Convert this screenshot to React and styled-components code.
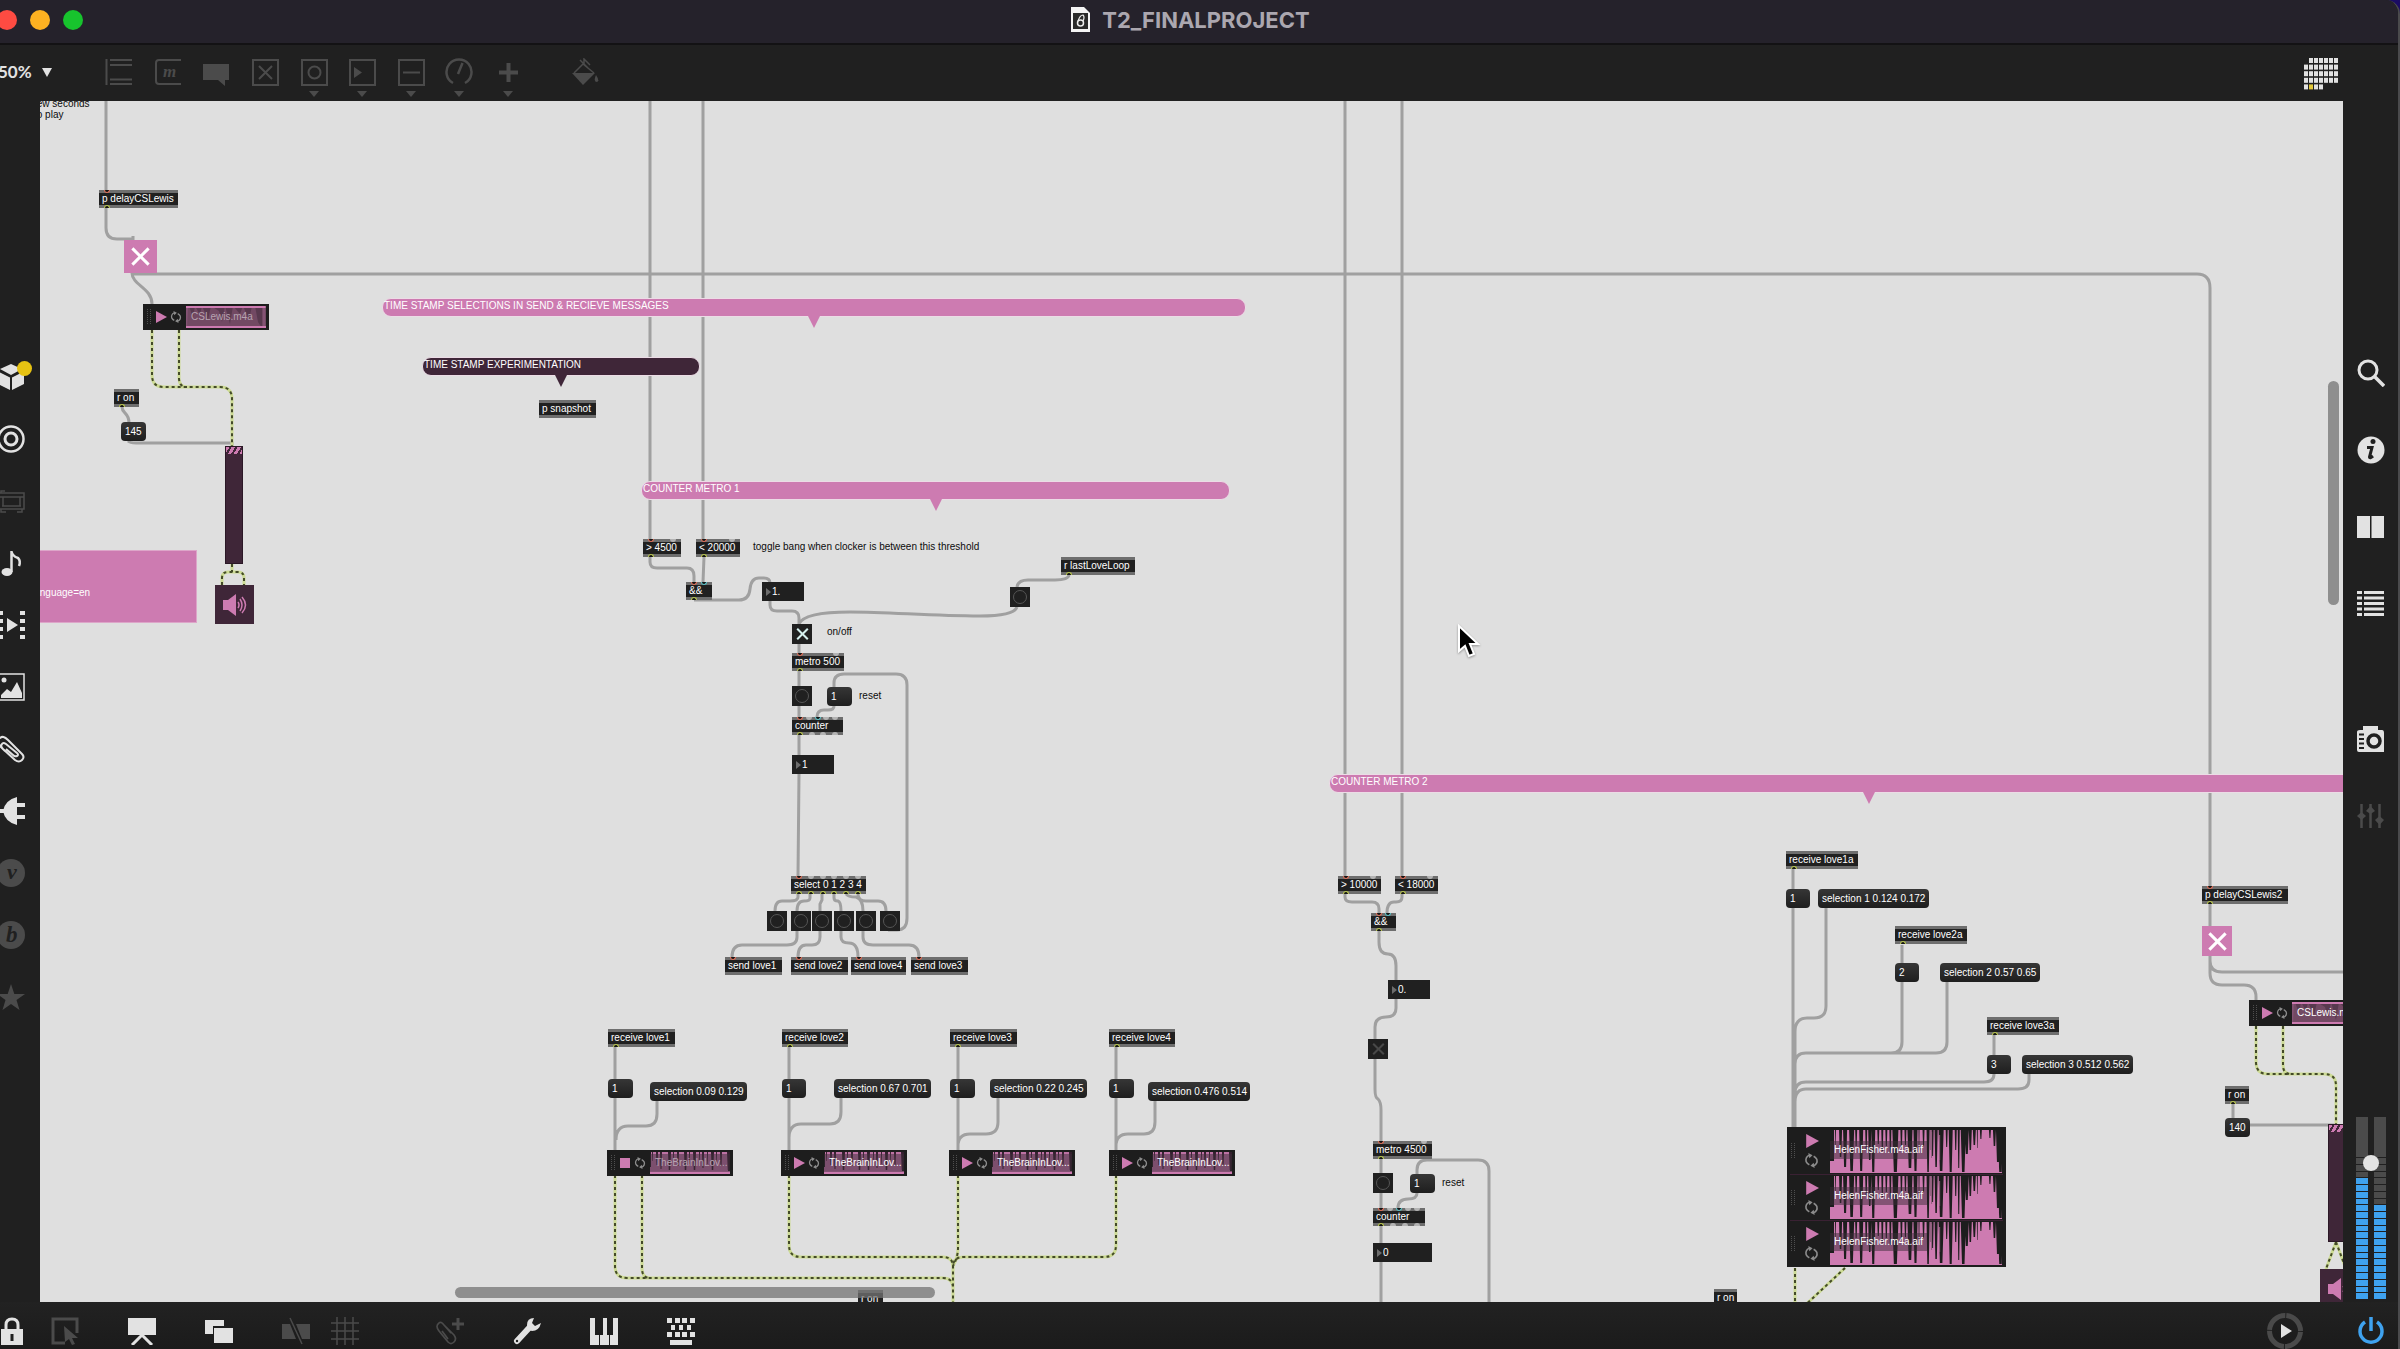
import React from 'react';
import styled, { createGlobalStyle, css } from 'styled-components';

const c = {
  chrome: '#202020',
  canvas: '#dfdfdf',
  pink: '#cd7bb1',
  plum: '#3f2638',
  box: '#202020',
  bar: '#6e6e6e',
  cord: '#a0a0a0',
  icon: '#e2e2e2',
  dim: '#4b4b4b',
  blue: '#3fa2ef',
};

const sans = `"Liberation Sans", Arial, sans-serif`;

const GlobalStyle = createGlobalStyle`
  *, *::before, *::after { box-sizing: border-box; }
  body { margin: 0; background: #1b0c63; font-family: ${sans}; overflow: hidden; }
  button, input, select { font: inherit; margin: 0; border: 0; padding: 0; }
  svg { display: block; }
`;

/* ---------- window frame ---------- */

const Window = styled.div`
  display: flex;
  flex-direction: column;
  height: 100vh;
  background: ${c.chrome};
  border-right: 2px solid #4a4a4c;
  border-top-right-radius: 14px;
  overflow: hidden;
`;

const TitleBar = styled.header`
  display: grid;
  grid-template-columns: 1fr auto 1fr;
  align-items: center;
  height: 45px;
  flex: none;
  padding-bottom: 4px;
  background: #25222b;
  border-bottom: 2px solid #131214;
`;

const Lights = styled.div`
  display: flex;
  gap: 13px;
  margin-left: -3px;
`;

const Light = styled.button`
  width: 20px;
  height: 20px;
  border-radius: 50%;
  background: ${(p) => p.$color};
`;

const Title = styled.h1`
  display: flex;
  align-items: center;
  gap: 12px;
  margin: 0;
  padding-right: 17px;
  font: 700 22px/24px Inter, ${sans};
  color: #aba7af;
`;

const ToolBar = styled.div`
  display: flex;
  align-items: flex-start;
  flex: none;
  height: 56px;
  padding: 13px 59px 0 0;
`;

const ZoomLabel = styled.label`
  display: flex;
  align-items: center;
  gap: 8px;
  width: 107px;
  height: 28px;
  margin-left: -2px;
`;

const ZoomSelect = styled.select`
  appearance: none;
  width: 36px;
  background: none;
  color: ${c.icon};
  font: 700 17px/24px Lato, ${sans};
`;

const ObjectTools = styled.div`
  display: flex;
  justify-content: space-between;
  width: 417px;
  margin-right: 49px;
`;

const ToolButton = styled.button`
  display: flex;
  flex-direction: column;
  align-items: center;
  gap: 5px;
  background: none;
  color: ${(p) => (p.$dim ? c.dim : c.icon)};
`;

const Spacer = styled.div`
  flex: 1;
`;

const Main = styled.div`
  display: flex;
  flex: 1;
  min-height: 0;
`;

const LeftRail = styled.nav`
  display: flex;
  flex-direction: column;
  gap: 34px;
  width: 43px;
  flex: none;
  margin-left: -3px;
  padding-top: 262px;
`;

const RightRail = styled.aside`
  display: flex;
  flex-direction: column;
  align-items: center;
  width: 55px;
  flex: none;
  padding: 258px 0 3px;
`;

const RailGroup = styled.nav`
  display: flex;
  flex-direction: column;
  gap: 49px;
  margin-bottom: 107px;
`;

const RailButton = styled.button`
  position: relative;
  width: 28px;
  height: 28px;
  background: none;
  color: ${(p) => (p.$dim ? c.dim : c.icon)};
`;

const Badge = styled.span`
  position: absolute;
  top: -2px;
  left: 20px;
  width: 15px;
  height: 15px;
  border-radius: 50%;
  background: #e6c212;
`;

const BottomBar = styled.footer`
  display: flex;
  align-items: center;
  flex: none;
  height: 47px;
  padding: 10px 13px 0 0;
  background: linear-gradient(#222222, #1b1b1b);
`;

const BottomGroup = styled.div`
  display: flex;
  gap: 49px;
  margin-left: ${(p) => p.$before}px;
`;

const BottomEnd = styled.div`
  display: flex;
  align-items: center;
  gap: 54px;
  margin-left: auto;
`;

const PlainButton = styled.button`
  background: none;
  color: ${(p) => p.$color || c.icon};
`;

/* ---------- master volume ---------- */

const Volume = styled.label`
  position: relative;
  display: flex;
  gap: 6px;
  height: 182px;
  margin-top: auto;
`;

const Meter = styled.span`
  display: flex;
  flex-direction: column;
  gap: 1px;
  width: 12px;
`;

const Headroom = styled.span`
  height: 40px;
  background: ${c.dim};
`;

const Segment = styled.span`
  flex: 1;
  background: ${(p) => (p.$on ? c.blue : c.dim)};
`;

const VolumeRange = styled.input`
  position: absolute;
  inset: 0 7px;
  width: 16px;
  height: 182px;
  appearance: none;
  background: none;
  writing-mode: vertical-lr;
  direction: rtl;
  &::-webkit-slider-thumb {
    appearance: none;
    width: 16px;
    height: 16px;
    border-radius: 50%;
    background: #e4e4e4;
  }
`;

/* ---------- patcher canvas ---------- */

const Canvas = styled.main`
  position: relative;
  flex: 1;
  min-width: 0;
  overflow: hidden;
  background: ${c.canvas};
`;

const Surface = styled.div`
  position: absolute;
  left: -40px;
  top: -101px;
  width: 2600px;
  height: 1500px;
`;

const Cords = styled.svg`
  position: absolute;
  inset: 0;
  fill: none;
  stroke-linecap: butt;
`;

const at = css`
  position: absolute;
  left: ${(p) => p.$x}px;
  top: ${(p) => p.$y}px;
  ${(p) => p.$w && `width: ${p.$w}px;`}
`;

const nodeText = css`
  font-size: 10px;
  line-height: 12px;
  white-space: nowrap;
  color: #ffffff;
`;

const ObjectBox = styled.div`
  ${at}
  ${nodeText}
  background: ${c.box};
`;

const ObjectText = styled.div`
  padding: 0 3px;
`;

const PortBar = styled.div`
  display: flex;
  justify-content: space-between;
  height: 3px;
  padding: 0 5px;
  background: ${c.bar};
`;

const portColors = { r: '#e0705a', b: '#5cc4c9', g: '#b9c64e' };

const Port = styled.span`
  width: 6px;
  height: 3px;
  border-radius: ${(p) => (p.$out ? '3px 3px 0 0' : '0 0 3px 3px')};
  background: ${(p) => (p.$kind === 'n' ? '#b4b4b4' : '#151515')};
  ${(p) =>
    p.$kind !== 'n' &&
    `border: 1px solid ${portColors[p.$kind]}; border-${p.$out ? 'bottom' : 'top'}: 0;`}
`;

const Message = styled.button`
  ${at}
  ${nodeText}
  height: 19px;
  padding: 0 4px;
  text-align: left;
  border-radius: 4px;
  background: linear-gradient(#363636, #1e1e1e);
`;

const NumberField = styled.label`
  ${at}
  ${nodeText}
  display: flex;
  align-items: center;
  gap: 1px;
  height: 19px;
  padding-left: 4px;
  background: ${c.box};
  &::before {
    content: '';
    border: 4px solid transparent;
    border-left: 5px solid #6c6c6c;
    border-right: 0;
  }
`;

const NumberInput = styled.input`
  flex: 1;
  min-width: 0;
  background: none;
  color: inherit;
`;

const Bang = styled.button`
  ${at}
  display: grid;
  place-items: center;
  width: 20px;
  height: 20px;
  background: ${c.box};
  &::before {
    content: '';
    width: 14px;
    height: 14px;
    border: 1px solid #555555;
    border-radius: 50%;
  }
`;

const Toggle = styled.input`
  ${at}
  appearance: none;
  display: grid;
  place-items: center;
  width: ${(p) => p.$size}px;
  height: ${(p) => p.$size}px;
  background: ${(p) => p.$bg || c.box};
  &::before,
  &::after {
    content: '';
    grid-area: 1 / 1;
    width: ${(p) => (p.$size > 24 ? 23 : 15)}px;
    height: ${(p) => (p.$size > 24 ? 3 : 2)}px;
    background: ${(p) => p.$mark};
    transform: rotate(45deg);
  }
  &::after {
    transform: rotate(-45deg);
  }
`;

const Comment = styled.p`
  ${at}
  margin: 0;
  font-size: 10px;
  line-height: 11px;
  white-space: pre;
  color: #0c0c0c;
`;

const Banner = styled.h2`
  ${at}
  margin: 0;
  height: 19px;
  padding: 1px;
  font-size: 10px;
  font-weight: 400;
  line-height: 12px;
  white-space: nowrap;
  color: #ffffff;
  background: ${(p) => p.$color};
  border: 1px solid #ecdce6;
  border-radius: 9px;
  &::after {
    content: '';
    position: absolute;
    top: 17px;
    left: 50%;
    margin-left: -6px;
    border: 6px solid transparent;
    border-top: 12px solid ${(p) => p.$color};
    border-bottom: 0;
  }
`;

const UrlPanel = styled.div`
  ${at}
  display: flex;
  align-items: center;
  height: 73px;
  padding: 12px 0 0 12px;
  font-size: 10px;
  color: #fff;
  background: ${c.pink};
  border: 1px solid #dda6c9;
`;

const Gain = styled.input`
  ${at}
  appearance: none;
  width: 18px;
  height: 118px;
  background: ${c.plum};
  border: 1px solid #2b1826;
  writing-mode: vertical-lr;
  direction: rtl;
  &::-webkit-slider-thumb {
    appearance: none;
    width: 16px;
    height: 7px;
    background: repeating-linear-gradient(120deg, ${c.pink} 0 3px, ${c.plum} 3px 5px);
  }
`;

const Dac = styled.button`
  ${at}
  display: grid;
  place-items: center;
  width: 39px;
  height: 39px;
  background: ${c.plum};
  color: ${c.pink};
`;

const Player = styled.div`
  ${at}
  background: #1d1d1d;
  padding: ${(p) => (p.$tall ? 1 : 2)}px 3px;
`;

const Clip = styled.div`
  display: flex;
  align-items: center;
  height: ${(p) => (p.$tall ? 46 : 22)}px;
  & + & {
    border-top: 1px solid #3a2133;
  }
`;

const ClipButtons = styled.div`
  display: flex;
  flex-direction: ${(p) => (p.$tall ? 'column' : 'row')};
  align-items: center;
  justify-content: center;
  gap: ${(p) => (p.$tall ? 5 : 3)}px;
  width: ${(p) => (p.$tall ? 25 : 28)}px;
  margin: ${(p) => (p.$tall ? '0 6px 0 3px' : '0 4px 0 2px')};
`;

const WaveBox = styled.div`
  position: relative;
  flex: 1;
  height: ${(p) => (p.$tall ? 43 : 22)}px;
`;

const ClipName = styled.span`
  position: absolute;
  left: 0;
  right: ${(p) => (p.$tall ? 'auto' : '0')};
  top: ${(p) => (p.$tall ? 11 : 2)}px;
  padding: 3px ${(p) => (p.$tall ? 4 : 5)}px;
  font-size: 10px;
  line-height: 12px;
  white-space: nowrap;
  color: ${(p) => (p.$faded ? '#b7a3b1' : '#ffffff')};
  background: rgba(60, 44, 56, 0.5);
`;

const ScrollThumb = styled.div`
  position: absolute;
  border-radius: 6px;
  background: rgba(115, 115, 115, 0.75);
`;

const HScroll = styled(ScrollThumb)`
  left: 18%;
  width: 480px;
  height: 11px;
  bottom: 4px;
`;

const VScroll = styled(ScrollThumb)`
  right: 4px;
  width: 11px;
  height: 224px;
  top: 280px;
`;

const Cursor = styled.svg`
  position: absolute;
  left: 1457px;
  top: 624px;
  filter: drop-shadow(0 1px 1px rgba(0, 0, 0, 0.35));
`;

/* ---------- icons ---------- */

const Svg = ({ s = 28, children }) => (
  <svg width={s} height={s} viewBox={`0 0 ${s} ${s}`} fill="none" stroke="currentColor" strokeWidth="2" aria-hidden="true">
    {children}
  </svg>
);

const solid = { fill: 'currentColor', stroke: 'none' };
const frame = <rect x="2" y="2" width="25" height="25" />;

const icons = {
  object: <path d="M1.500 1V27M5 2H27M5 7H27M5 21.500H27M5 26H27" />,
  message: (
    <>
      <path d="M27 2H5Q2 2 2 5V23Q2 26 5 26H27" />
      <text x="9" y="19" fontFamily="Liberation Serif" fontStyle="italic" fontWeight="700" fontSize="17" {...solid}>m</text>
    </>
  ),
  comment: <path d="M1 6H27V22H23V28L16 22H1Z" {...solid} />,
  toggle: <>{frame}<path d="M8 8L21 21M21 8L8 21" /></>,
  button: <>{frame}<circle cx="14.500" cy="14.500" r="6" /></>,
  number: <>{frame}<path d="M6 9L14 14.500L6 20Z" {...solid} /></>,
  slider: <>{frame}<path d="M6 14.500H23" /></>,
  dial: <path d="M8 25A12.500 12.500 0 1 1 20 25M13 16L17.500 5" strokeWidth="2.500" />,
  plus: <path d="M14.500 5V24M5 14.500H24" strokeWidth="4" />,
  bucket: (
    <>
      <path d="M3 15L12 6L23 15M9 2L17 10M13 6V1L19 7" strokeWidth="1.500" />
      <path d="M1 15H24L12 27Z" {...solid} />
      <path d="M25 17Q29 23 26 24Q22 24 25 17Z" {...solid} />
    </>
  ),
  cube: (
    <g {...solid}>
      <path d="M14 1L25 6L14 12L3 6Z" />
      <path d="M1 8.500L13 14.500V27L1 21Z" />
      <path d="M27 8.500L15 14.500V27L27 21Z" />
    </g>
  ),
  disc: <><circle cx="14" cy="14" r="12.500" strokeWidth="2.500" /><circle cx="14" cy="14" r="6" strokeWidth="3" /></>,
  amp: <path d="M0 6H27V22H0ZM0 10H27M6 10V19M23 10V19M5 19H24M4 22V25H9M20 25H25V22M4 6V4H8" strokeWidth="1.500" />,
  note: <><ellipse cx="10" cy="23" rx="5.500" ry="4" {...solid} /><path d="M14.500 23V2Q15 7 21 9Q24 12 22 17" strokeWidth="2.500" /></>,
  film: (
    <g {...solid}>
      <path d="M10 7L21 14L10 21Z" />
      {[0, 8, 16, 24].map((y) => <path key={y} d={`M1 ${y}H6V${y + 4}H1ZM23 ${y}H28V${y + 4}H23Z`} />)}
    </g>
  ),
  image: <><rect x="1" y="1" width="26" height="26" strokeWidth="1.500" /><path d="M4 24V22L10 16L14 19L20 9L25 20V25H4Z" {...solid} /><circle cx="7" cy="7" r="2.500" {...solid} /></>,
  paperclip: <path d="M20 18L9 9Q6 7 5 9Q3 11 6 14L18 25Q22 28 25 25Q28 22 25 19L11 5Q6 0 3 3Q-1 6 3 11L8 16M20 18Q22 20 20 21Q18 22 16 20L9 14" />,
  plug: <><path d="M0 14H8" strokeWidth="4" /><path d="M20 0V28Q8 25 6 14Q8 3 20 0ZM19 6H28V10H19ZM19 18H28V22H19Z" {...solid} /></>,
  vizzie: <><circle cx="14" cy="14" r="14" {...solid} /><text x="10" y="20" fontFamily="Liberation Serif" fontStyle="italic" fontWeight="700" fontSize="22" fill={c.chrome} stroke="none">v</text></>,
  beap: <><circle cx="14" cy="14" r="14" {...solid} /><text x="9" y="21" fontFamily="Liberation Serif" fontStyle="italic" fontWeight="700" fontSize="23" fill={c.chrome} stroke="none">b</text></>,
  star: <path d="M14 1L17.300 11H28L19.500 17L22.500 27L14 21L5.500 27L8.500 17L0 11H10.700Z" {...solid} />,
  search: <><circle cx="11" cy="11" r="9" strokeWidth="3" /><path d="M17 17L27 27" strokeWidth="3.500" /></>,
  info: <><circle cx="14" cy="14" r="13.500" {...solid} /><circle cx="16" cy="5.500" r="2.500" fill={c.chrome} stroke="none" /><path d="M10 11.500H15L12.500 21Q12.500 23 16 20" stroke={c.chrome} strokeWidth="3" /></>,
  columns: <path d="M0 3H13V25H0ZM14.500 3H27V25H14.500Z" {...solid} />,
  list: <path d="M0 2.500H5M7 2.500H27M0 8H5M7 8H27M0 13.500H5M7 13.500H27M0 19H5M7 19H27M0 24.500H5M7 24.500H27" strokeWidth="3" />,
  camera: <><path d="M6 1H21V5H25Q27 5 27 8V27H2Q0 27 0 25V7Q0 5 3 5H6Z" {...solid} /><circle cx="17" cy="16" r="6" stroke={c.chrome} strokeWidth="3.500" /><path d="M2 9.500H7M2 14H7M2 18.500H7M2 23H7" stroke={c.chrome} /></>,
  sliders: <><path d="M4.500 2V26M13.500 2V26M22.500 2V26" strokeWidth="2.500" /><path d="M0 14L4.500 10L9 14L4.500 18ZM9 9L13.500 4L18 9L13.500 12ZM18 18L22.500 14L27 18L22.500 23Z" {...solid} /></>,
  lock: <><rect x="3" y="12" width="22" height="16" {...solid} /><path d="M8 13V8Q8 2 14 2Q20 2 20 8V13" strokeWidth="3" /><path d="M14 17V24" stroke={c.chrome} strokeWidth="3" /></>,
  select: <><path d="M14 26H2V2H26V16" strokeWidth="3" /><path d="M13 9L27 21L21 21L24 27L21 28L18 22L14 25Z" {...solid} /></>,
  present: <><path d="M0 1H28V18H0Z" {...solid} /><path d="M14 18L4 28M14 18L24 28" strokeWidth="3" /></>,
  windows: <path d="M0 3H19V9H8V17H0ZM9 11H28V26H9Z" {...solid} />,
  unlink: <><path d="M0 7H8L14 22H0ZM14 7H28V22H20Z" {...solid} /><path d="M8 1L20 27" strokeWidth="1.500" /></>,
  grid: <path d="M6 0V28M14 0V28M22 0V28M0 6H28M0 14H28M0 22H28" strokeWidth="1.500" />,
  clipplus: <><path d="M15 16L8 8Q5 4 3 6Q-1 9 3 14L12 25Q15 28 18 25Q21 22 18 18L9 9M12 22L6 14" strokeWidth="1.700" /><path d="M22 1V13M16 7H28" strokeWidth="3" /></>,
  wrench: <><path d="M4 24L16 11" strokeWidth="6" strokeLinecap="round" /><path d="M21 1Q14 1 14 8Q14 13 19 14Q26 14 28 6L22 9L19 6Z" {...solid} /><circle cx="4" cy="24" r="1.200" fill={c.chrome} stroke="none" /></>,
  piano: <><path d="M0 1H5V18H9V28H0ZM13 1H17V18H19V28H10V18H13ZM23 1H28V28H20V18H23Z" {...solid} /></>,
  keys: (
    <g {...solid}>
      {[0, 8, 15, 23].map((x) => <path key={x} d={`M${x} 1H${x + 5}V6H${x}ZM${x} 15H${x + 5}V20H${x}Z`} />)}
      {[4, 12, 20].map((x) => <rect key={x} x={x} y="8" width="4" height="5" />)}
      <rect x="3" y="23" width="22" height="5" />
    </g>
  ),
};

const Caret = ({ w = 10, h = 6 }) => (
  <svg width={w} height={h} viewBox="0 0 10 6" preserveAspectRatio="none" aria-hidden="true">
    <path d="M0 0H10L5 6Z" fill="currentColor" />
  </svg>
);

const FileIcon = () => (
  <svg width="19" height="25" viewBox="0 0 19 25" aria-hidden="true">
    <path d="M0 0H13L19 6V25H0Z" fill="#f4f4f4" />
    <path d="M2 6H17V22H2Z" fill="#2a2a2a" />
    <circle cx="9.500" cy="16" r="3" fill="none" stroke="#eee" strokeWidth="1.500" />
    <path d="M7 14Q9 8 12 8Q14 10 12 14" fill="none" stroke="#eee" strokeWidth="1.200" />
  </svg>
);

const dots = [
  [1, 2, 3, 4, 5, 6],
  [0, 1, 2, 3, 4, 5, 6],
  [0, 1, 2, 3, 4, 5, 6],
  [0, 1, 2, 3, 4, 5, 6],
  [0, 1, 2, 3],
];

const CalendarDots = () => (
  <svg width="35" height="33" viewBox="0 0 35 33" aria-hidden="true">
    {dots.map((row, y) =>
      row.map((x) => (
        <rect key={`${x}-${y}`} x={x * 5} y={y * 6.6} width="4" height="5" fill={x === 1 && y === 4 ? '#e3c93a' : c.icon} />
      )),
    )}
  </svg>
);

const Refresh = ({ size }) => (
  <svg width={size} height={size} viewBox="0 0 14 14" fill="none" stroke="#8c8c8c" strokeWidth="1.500" aria-hidden="true">
    <path d="M5 2Q1 4 2 8Q3 10 5 11M9 12Q13 10 12 6Q11 4 9 3" />
    <path d="M4 0L8 2L5 5ZM10 14L6 12L9 9Z" fill="#8c8c8c" stroke="none" />
  </svg>
);

const Play = ({ size, stop }) => (
  <svg width={size} height={size} viewBox="0 0 12 12" fill={c.pink} aria-hidden="true">
    {stop ? <path d="M1 1H11V11H1Z" /> : <path d="M1 0L12 6L1 12Z" />}
  </svg>
);

const Grip = ({ h }) => (
  <svg width="6" height={h} aria-hidden="true">
    <path d={`M1.500 0V${h}M4.500 0V${h}`} stroke="#4f4f4f" strokeDasharray="1 1" />
  </svg>
);

/* ---------- waveforms: [x, width, depth] notches cut from the top ---------- */

const notch = (list) => list.map(([x, w, d]) => `M${x} 0L${x + w / 4} ${d}H${x + (w * 3) / 4}L${x + w} 0Z`).join('');

const helenNotches = [
  [5, 1, 15], [9, 3, 27], [13, 4, 37], [19, 5, 41], [25, 2, 16], [29, 4, 41], [35, 2, 20], [38, 3, 30], [41, 4, 42],
  [47, 2, 14], [51, 2, 21], [55, 2, 16], [59, 2, 23], [62, 6, 42], [70, 2, 18], [74, 2, 15], [77, 5, 38], [83, 4, 41],
  [88, 1, 20], [92, 2, 16], [96, 3, 42], [101, 2, 26], [104, 3, 37], [108, 5, 41], [115, 2, 17], [118, 4, 42],
  [124, 2, 20], [127, 2, 38], [130, 5, 42], [134, 4, 24], [138, 3, 20], [142, 3, 15], [146, 1, 18], [149, 2, 9],
  [158, 2, 8], [162, 3, 16], [165, 4, 32], [167, 5, 42],
];

const brainNotches = [
  [2, 1, 9], [6, 2, 13], [10, 2, 17], [18, 3, 18], [23, 1, 8], [27, 2, 14], [34, 3, 18],
  [39, 1, 12], [43, 3, 18], [49, 1, 9], [52, 2, 16], [57, 1, 12], [61, 3, 18], [66, 1, 10], [70, 2, 14], [77, 3, 18],
];

const HelenWave = () => (
  <svg width="100%" height="43" viewBox="0 0 172 43" preserveAspectRatio="none" aria-hidden="true">
    <path d="M0 43V31H4V0H168V40L171 31V43Z" fill={c.pink} />
    <path d={notch(helenNotches)} fill="#1d1d1d" />
    <path d="M101 2V28M109 5V30M100 0V20" stroke="#92627f" strokeWidth="1" />
  </svg>
);

const BrainWave = () => (
  <svg width="100%" height="22" viewBox="0 0 80 22" preserveAspectRatio="none" aria-hidden="true">
    <path d="M1 0H78V22H0V15H1Z" fill="#bd72a4" />
    <path d={notch(brainNotches)} fill="#35202f" />
    <path d="M0 19H80V22H0Z" fill={c.pink} />
  </svg>
);

const LewisWave = () => (
  <svg width="100%" height="22" viewBox="0 0 80 22" preserveAspectRatio="none" aria-hidden="true">
    <path d="M0 0H80V22H0Z" fill="#a8668f" />
    <path d="M3 0L7 12L9 0L14 9L16 0L22 14L25 0L33 5L36 16L39 0L44 18L47 0L54 8L57 0L63 14L66 0H69L72 16L76 22V0Z" fill="#5e3a52" opacity="0.700" />
    <path d="M78 22V1H1L0 22" stroke={c.pink} strokeWidth="2" fill="none" />
    <path d="M0 20H80V22H0Z" fill={c.pink} />
  </svg>
);

const waves = { helen: HelenWave, brain: BrainWave, lewis: LewisWave };

/* ---------- patch data ---------- */

const objects = [
  ['p delayCSLewis', 99, 190, 79, 'r', 'g'],
  ['p snapshot', 539, 400, 57, '', ''],
  ['r on', 114, 389, 25, '', 'g'],
  ['> 4500', 643, 539, 38, 'rn', 'g'],
  ['< 20000', 696, 539, 44, 'rn', 'g'],
  ['r lastLoveLoop', 1061, 557, 74, '', 'g'],
  ['&&', 686, 582, 26, 'rb', 'g'],
  ['metro 500', 792, 653, 52, 'rn', 'g'],
  ['counter', 792, 717, 51, 'rnbnn', 'gnnn'],
  ['select 0 1 2 3 4', 791, 876, 75, 'rnnnnn', 'gggggg'],
  ['send love1', 725, 957, 57, 'r', ''],
  ['send love2', 791, 957, 57, 'r', ''],
  ['send love4', 851, 957, 55, 'r', ''],
  ['send love3', 911, 957, 57, 'r', ''],
  ['receive love1', 608, 1029, 67, '', 'g'],
  ['receive love2', 782, 1029, 66, '', 'g'],
  ['receive love3', 950, 1029, 67, '', 'g'],
  ['receive love4', 1109, 1029, 66, '', 'g'],
  ['r on', 858, 1290, 25, '', ''],
  ['> 10000', 1338, 876, 43, 'rn', 'g'],
  ['< 18000', 1395, 876, 43, 'rn', 'g'],
  ['&&', 1371, 913, 25, 'rb', 'g'],
  ['metro 4500', 1373, 1141, 59, 'rn', 'g'],
  ['counter', 1373, 1208, 52, 'rnbnn', 'gnnn'],
  ['r on', 1714, 1289, 23, '', ''],
  ['receive love1a', 1786, 851, 72, '', 'g'],
  ['receive love2a', 1895, 926, 72, '', 'g'],
  ['receive love3a', 1987, 1017, 72, '', 'g'],
  ['p delayCSLewis2', 2202, 886, 86, 'r', 'g'],
  ['r on', 2225, 1086, 24, '', 'g'],
];

const messages = [
  ['145', 121, 422, 25],
  ['1', 827, 687, 25],
  ['1', 608, 1079, 25],
  ['selection 0.09 0.129', 650, 1082, 97],
  ['1', 782, 1079, 24],
  ['selection 0.67 0.701', 834, 1079, 97],
  ['1', 950, 1079, 25],
  ['selection 0.22 0.245', 990, 1079, 97],
  ['1', 1109, 1079, 25],
  ['selection 0.476 0.514', 1148, 1082, 102],
  ['1', 1410, 1174, 25],
  ['1', 1786, 889, 24],
  ['selection 1 0.124 0.172', 1818, 889, 111],
  ['2', 1895, 963, 24],
  ['selection 2 0.57 0.65', 1940, 963, 100],
  ['3', 1987, 1055, 24],
  ['selection 3 0.512 0.562', 2022, 1055, 111],
  ['140', 2225, 1118, 25],
];

const numbers = [
  ['1.', 762, 582, 42],
  ['1', 792, 755, 42],
  ['0.', 1388, 980, 42],
  ['0', 1373, 1243, 59],
];

const bangs = [
  [1010, 587], [792, 686], [1373, 1173],
  [767, 911], [791, 911], [812, 911], [834, 911], [856, 911], [880, 911],
];

const banners = [
  ['TIME STAMP SELECTIONS IN SEND & RECIEVE MESSAGES', 382, 298, 864, c.pink],
  ['TIME STAMP EXPERIMENTATION', 422, 357, 278, c.plum],
  ['COUNTER METRO 1', 641, 481, 589, c.pink],
  ['COUNTER METRO 2', 1329, 774, 1080, c.pink],
];

const comments = [
  ['few seconds\nto play', 34, 98],
  ['toggle bang when clocker is between this threshold', 753, 541],
  ['on/off', 827, 626],
  ['reset', 859, 690],
  ['reset', 1442, 1177],
];

const players = [
  { x: 143, y: 304, wave: 'lewis', names: ['CSLewis.m4a'], faded: true },
  { x: 607, y: 1150, wave: 'brain', names: ['TheBrainInLov...'], faded: true, stop: true },
  { x: 781, y: 1150, wave: 'brain', names: ['TheBrainInLov...'] },
  { x: 949, y: 1150, wave: 'brain', names: ['TheBrainInLov...'] },
  { x: 1109, y: 1150, wave: 'brain', names: ['TheBrainInLov...'] },
  { x: 2249, y: 1000, wave: 'lewis', names: ['CSLewis.m4a'] },
  { x: 1787, y: 1127, w: 219, tall: true, wave: 'helen', names: ['HelenFisher.m4a.aif', 'HelenFisher.m4a.aif', 'HelenFisher.m4a.aif'] },
];

const controlCords = `
  M106 90V190 M106 208V228Q106 239 117 239H133V236
  M132 273C132 285 152 288 152 304 M132 274H2197Q2210 274 2210 288V886
  M122 407C122 414 129 412 129 423 M128 441Q130 443 136 443H232V446
  M650 90V539 M703 90V539
  M650 557V562Q650 568 657 568H687Q694 568 694 576V582 M704 557L703 582
  M694 600H739Q749 600 750 589Q751 578 759 578H764Q770 578 770 583
  M770 601V605Q770 611 777 611H792Q799 611 799 618V624
  M1069 575Q1068 580 1055 580H1028Q1018 580 1017 587
  M1017 607Q1014 616 980 616C930 616 890 612 850 612Q804 612 799 624
  M799 644V653 M799 671V686 M799 706V717 M799 735V755 M799 773L798 876
  M834 706Q834 710 828 710H824Q817 710 817 717
  M834 688V683Q834 674 844 674H896Q907 674 907 685V918Q907 930 897 930H888
  M798 894V897Q798 901 790 901H782Q775 901 775 911
  M810 894V898Q810 901 804 901Q797 901 797 911
  M822 894V900L820 904V911 M834 894V898Q834 901 838 901Q841 902 841 911
  M846 894Q848 897 856 897Q863 899 863 911 M858 894Q858 901 866 901H878Q886 901 886 911
  M797 931V937Q797 945 787 945H742Q732 945 732 957
  M820 931V937Q820 945 812 945H806Q798 945 798 957
  M841 931V937Q841 943 849 943Q858 943 858 957
  M863 931V937Q863 945 873 945H909Q919 945 919 957
  M615 1047V1150 M789 1047V1150 M958 1047V1150 M1116 1047V1150
  M657 1101V1114Q657 1126 646 1126H628Q616 1126 616 1140
  M841 1098V1112Q841 1124 830 1124H801Q789 1124 789 1138
  M998 1098V1122Q998 1134 986 1134H970Q958 1134 958 1146
  M1155 1101V1122Q1155 1134 1144 1134H1128Q1116 1134 1116 1146
  M1345 90V876 M1402 90V876
  M1345 894V897Q1345 902 1352 902H1372Q1379 902 1379 909V913
  M1402 894V897Q1402 902 1396 902H1394Q1387 902 1387 913
  M1379 931V942Q1379 954 1388 954Q1396 954 1396 966V980
  M1396 998V1008Q1396 1017 1386 1017Q1375 1017 1375 1027V1039
  M1375 1059V1089Q1375 1098 1378 1099Q1381 1102 1381 1110V1141
  M1381 1159V1173 M1381 1193V1208 M1381 1226V1243 M1381 1261V1310
  M1417 1174V1170Q1417 1160 1427 1160H1478Q1489 1160 1489 1171V1310
  M1417 1193Q1417 1199 1408 1199Q1398 1199 1398 1208
  M1793 869V1127 M1826 908V1006Q1826 1018 1814 1018H1807Q1795 1018 1795 1032V1127
  M1902 945V963 M1902 982V1042Q1902 1053 1891 1053H1806Q1795 1053 1795 1064
  M1947 982V1042Q1947 1053 1936 1053H1880
  M1994 1035V1055 M1994 1074Q1994 1082 1984 1082H1806Q1795 1082 1795 1093
  M2029 1074V1080Q2029 1089 2018 1089H1806Q1795 1089 1795 1102
  M2210 904V926 M2210 956V961Q2210 972 2222 972H2360
  M2210 956V973Q2210 985 2222 985H2244Q2256 985 2256 997V1001
  M2233 1104V1119 M2250 1125H2336`;

const signalCords = `
  M152 330V375Q152 387 164 387H220Q232 387 232 399V446 M179 330V378Q179 387 187 387
  M232 564V572 M222 585V578Q222 572 228 572H238Q244 572 244 578V585
  M615 1175V1266Q615 1278 627 1278H943Q953 1278 953 1288V1310
  M642 1175V1268Q642 1278 650 1278
  M789 1175V1245Q789 1257 801 1257H943Q953 1257 953 1267V1310
  M958 1175V1248Q958 1257 953 1266
  M1116 1175V1245Q1116 1257 1104 1257H964Q953 1257 953 1267
  M1795 1268V1310 M1845 1268L1800 1310
  M2256 1026V1062Q2256 1074 2268 1074H2324Q2336 1074 2336 1086V1124
  M2283 1026V1065Q2283 1074 2291 1074
  M2336 1242L2326 1269 M2336 1242L2346 1269`;

const PortRow = ({ kinds, out }) => (
  <PortBar>
    {kinds.split('').map((k, i) => (
      <Port key={i} $kind={k} $out={out} />
    ))}
  </PortBar>
);

const Patch = () => (
  <Surface>
    <Cords width="2600" height="1500" aria-hidden="true">
      <path d={controlCords} stroke={c.cord} strokeWidth="3" />
      <path d={signalCords} stroke="#cddb95" strokeWidth="3" />
      <path d={signalCords} stroke="#434a28" strokeWidth="2" strokeDasharray="3 3" />
    </Cords>
    {comments.map(([text, x, y]) => (
      <Comment key={`${x}-${y}`} $x={x} $y={y}>{text}</Comment>
    ))}
    {banners.map(([text, x, y, w, color]) => (
      <Banner key={text} $x={x} $y={y} $w={w} $color={color}>{text}</Banner>
    ))}
    <UrlPanel $x={19} $y={550} $w={178}>language=en</UrlPanel>
    {objects.map(([text, x, y, w, ins, outs]) => (
      <ObjectBox key={`${x}-${y}`} $x={x} $y={y} $w={w}>
        <PortRow kinds={ins} />
        <ObjectText>{text}</ObjectText>
        <PortRow kinds={outs} out />
      </ObjectBox>
    ))}
    {messages.map(([text, x, y, w]) => (
      <Message key={`${x}-${y}`} $x={x} $y={y} $w={w}>{text}</Message>
    ))}
    {numbers.map(([value, x, y, w]) => (
      <NumberField key={`${x}-${y}`} $x={x} $y={y} $w={w}>
        <NumberInput aria-label="Number box" defaultValue={value} />
      </NumberField>
    ))}
    {bangs.map(([x, y]) => (
      <Bang key={`${x}-${y}`} $x={x} $y={y} aria-label="Bang" />
    ))}
    <Toggle type="checkbox" aria-label="Delay on" defaultChecked $x={124} $y={240} $size={33} $bg={c.pink} $mark="#fff" />
    <Toggle type="checkbox" aria-label="Delay 2 on" defaultChecked $x={2202} $y={926} $size={30} $bg={c.pink} $mark="#fff" />
    <Toggle type="checkbox" aria-label="Metro 1 on" defaultChecked $x={792} $y={624} $size={20} $mark="#d5f0ee" />
    <Toggle type="checkbox" aria-label="Metro 2 on" $x={1368} $y={1039} $size={20} $mark="#484848" />
    {players.map(({ x, y, w = 126, tall, wave, names, faded, stop }) => {
      const Wave = waves[wave];
      return (
        <Player key={`${x}-${y}`} $x={x} $y={y} $w={w} $tall={tall}>
          {names.map((name, i) => (
            <Clip key={i} $tall={tall}>
              <Grip h={16} />
              <ClipButtons $tall={tall}>
                <PlainButton aria-label={stop ? 'Stop' : 'Play'}><Play size={tall ? 14 : 12} stop={stop} /></PlainButton>
                <PlainButton aria-label="Loop"><Refresh size={tall ? 15 : 12} /></PlainButton>
              </ClipButtons>
              <WaveBox $tall={tall}>
                <Wave />
                <ClipName $tall={tall} $faded={faded}>{name}</ClipName>
              </WaveBox>
            </Clip>
          ))}
        </Player>
      );
    })}
    <Gain type="range" aria-label="Gain" defaultValue="100" $x={225} $y={446} />
    <Gain type="range" aria-label="Gain 2" defaultValue="100" $x={2328} $y={1124} />
    {[[215, 585], [2320, 1269]].map(([x, y]) => (
      <Dac key={x} $x={x} $y={y} aria-label="Audio output">
        <svg width="24" height="22" viewBox="0 0 24 22" fill="none" stroke="currentColor" strokeWidth="2">
          <path d="M0 6H5L13 0V22L5 16H0Z" fill="currentColor" stroke="none" />
          <path d="M15 8Q17 11 15 14M17 5Q21 11 17 17M19 3Q26 11 19 19" strokeWidth="1.500" />
        </svg>
      </Dac>
    ))}
    <Cursor width="24" height="36" viewBox="0 0 24 36" aria-hidden="true">
      <path d="M2 2V27L8 22L12 32L17 30L13 20H21Z" fill="#000" stroke="#fff" strokeWidth="2" />
    </Cursor>
  </Surface>
);

/* ---------- chrome ---------- */

const objectTools = [
  ['object'], ['message'], ['comment'], ['toggle'],
  ['button', true], ['number', true], ['slider', true], ['dial', true], ['plus', true],
];

const leftTools = [
  ['cube'], ['disc'], ['amp', true], ['note'], ['film'], ['image'],
  ['paperclip'], ['plug'], ['vizzie', true], ['beap', true], ['star', true],
];

const rightTools = [
  [['search'], ['info'], ['columns'], ['list']],
  [['camera'], ['sliders', true]],
];

const bottomTools = [
  [-2, [['lock']]],
  [25, [['select', true], ['present'], ['windows'], ['unlink', true]]],
  [21, [['grid', true]]],
  [77, [['clipplus', true], ['wrench'], ['piano'], ['keys']]],
];

const RailItem = ({ name, dim, children }) => (
  <RailButton aria-label={name} $dim={dim}>
    <Svg>{icons[name]}</Svg>
    {children}
  </RailButton>
);

const MeterColumn = ({ lit }) => (
  <Meter>
    <Headroom />
    {Array.from({ length: 21 }, (_, i) => (
      <Segment key={i} $on={i >= 21 - lit} />
    ))}
  </Meter>
);

export default function App() {
  return (
    <Window>
      <GlobalStyle />
      <TitleBar>
        <Lights>
          <Light aria-label="Close" $color="#fe4b42" />
          <Light aria-label="Minimise" $color="#fdb121" />
          <Light aria-label="Zoom" $color="#17c32d" />
        </Lights>
        <Title><FileIcon />T2_FINALPROJECT</Title>
      </TitleBar>
      <ToolBar>
        <ZoomLabel>
          <ZoomSelect aria-label="Zoom level" defaultValue="50">
            <option value="50">50%</option>
            <option value="75">75%</option>
          </ZoomSelect>
          <PlainButton as="span"><Caret h={9} /></PlainButton>
        </ZoomLabel>
        <ObjectTools>
          {objectTools.map(([name, menu]) => (
            <ToolButton key={name} aria-label={name} $dim>
              <Svg>{icons[name]}</Svg>
              {menu && <Caret />}
            </ToolButton>
          ))}
        </ObjectTools>
        <ToolButton aria-label="Format" $dim><Svg>{icons.bucket}</Svg></ToolButton>
        <Spacer />
        <ToolButton aria-label="Calendar"><CalendarDots /></ToolButton>
      </ToolBar>
      <Main>
        <LeftRail>
          {leftTools.map(([name, dim]) => (
            <RailItem key={name} name={name} dim={dim}>{name === 'cube' && <Badge />}</RailItem>
          ))}
        </LeftRail>
        <Canvas>
          <Patch />
          <HScroll />
          <VScroll />
        </Canvas>
        <RightRail>
          {rightTools.map((group, i) => (
            <RailGroup key={i}>
              {group.map(([name, dim]) => <RailItem key={name} name={name} dim={dim} />)}
            </RailGroup>
          ))}
          <Volume>
            <MeterColumn lit={18} />
            <MeterColumn lit={14} />
            <VolumeRange type="range" aria-label="Master volume" defaultValue="77" />
          </Volume>
        </RightRail>
      </Main>
      <BottomBar>
        {bottomTools.map(([before, group]) => (
          <BottomGroup key={before} $before={before}>
            {group.map(([name, dim]) => <RailItem key={name} name={name} dim={dim} />)}
          </BottomGroup>
        ))}
        <BottomEnd>
          <PlainButton aria-label="Run">
            <Svg s={36}>
              <circle cx="18" cy="18" r="15.500" stroke="#4a4a4a" strokeWidth="5" strokeDasharray="23.300 1" strokeDashoffset="-1" />
              <path d="M14 11L25 18L14 25Z" {...solid} />
            </Svg>
          </PlainButton>
          <PlainButton aria-label="Audio on" $color={c.blue}>
            <Svg><path d="M8 5A11 11 0 1 0 20 5M14 0V14" strokeWidth="3.500" /></Svg>
          </PlainButton>
        </BottomEnd>
      </BottomBar>
    </Window>
  );
}
